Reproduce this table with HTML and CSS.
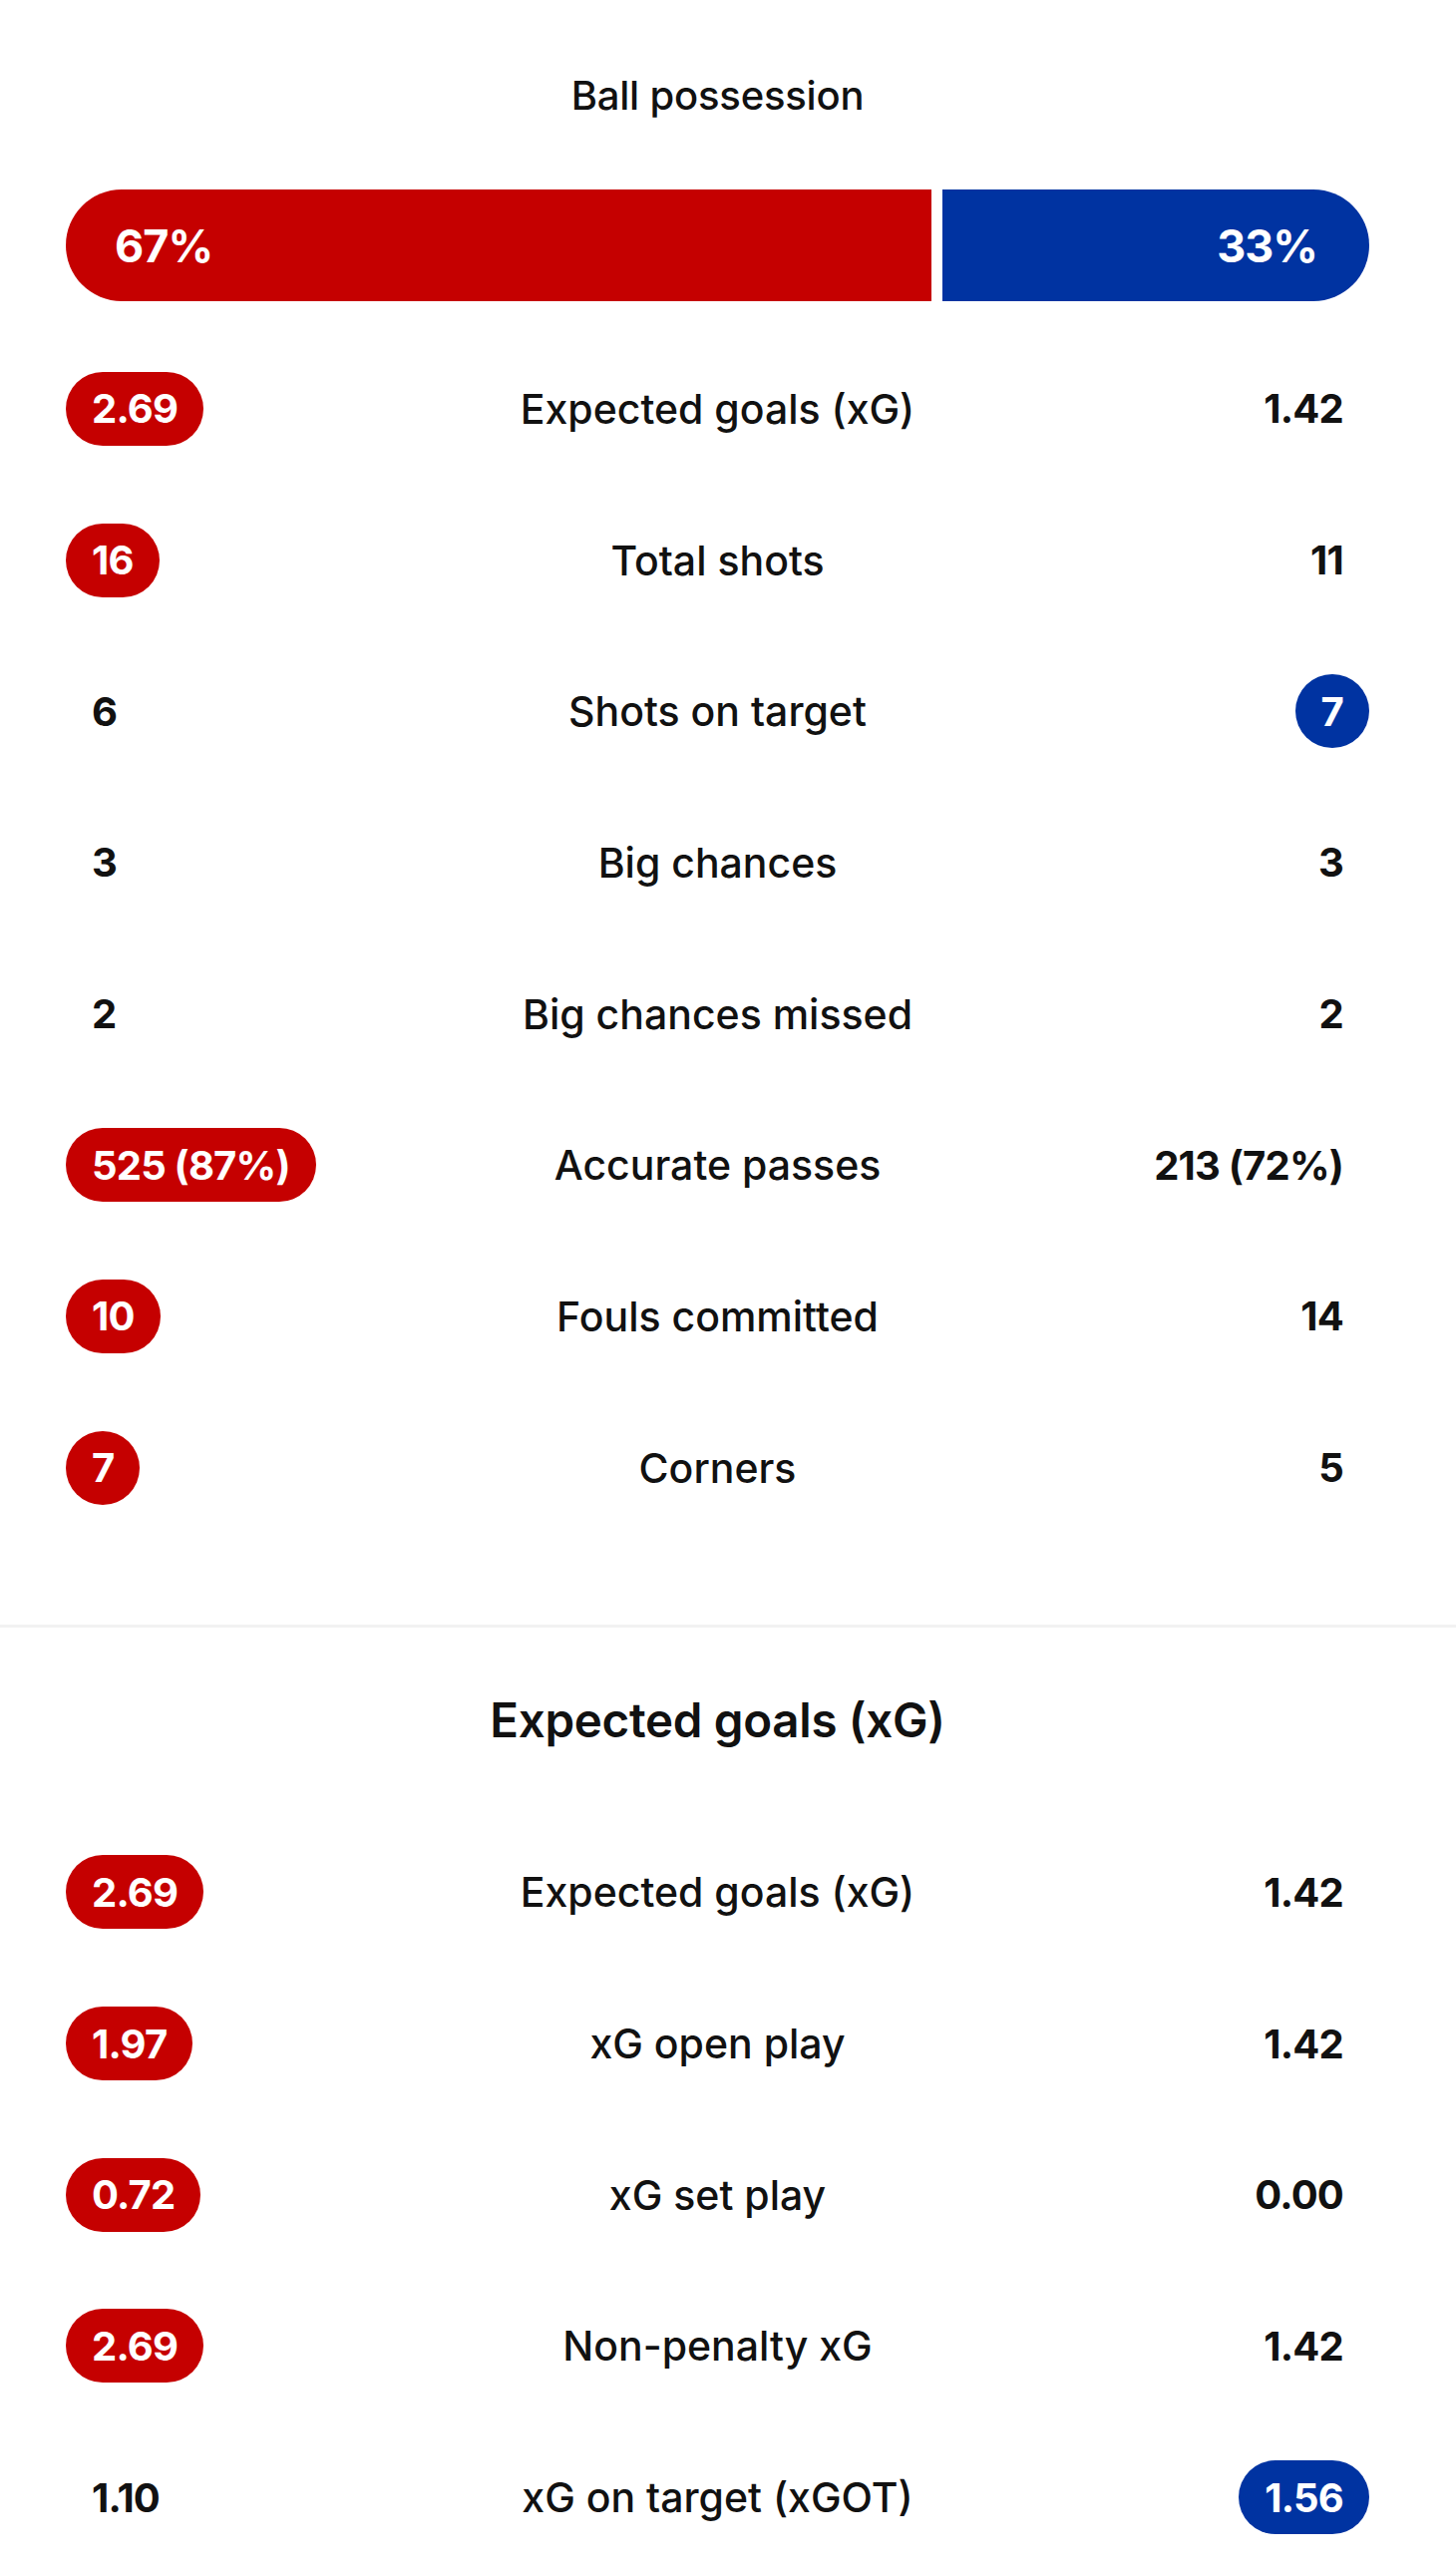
FILE: index.html
```html
<!DOCTYPE html>
<html lang="en">
<head>
<meta charset="utf-8">
<title>Match stats</title>
<link rel="stylesheet" href="styles.css">
</head>
<body>
<main class="stats">
  <section class="group group-top">
    <h2 class="title">Ball possession</h2>
    <div class="possession">
      <div class="poss poss-home" style="flex-basis: calc((100% - 11px) * 0.67)">67%</div>
      <div class="poss poss-away" style="flex-basis: calc((100% - 11px) * 0.33)">33%</div>
    </div>
    <div class="rows">
      <div class="row"><span class="val win-home">2.69</span><span class="label">Expected goals (xG)</span><span class="val">1.42</span></div>
      <div class="row"><span class="val win-home">16</span><span class="label">Total shots</span><span class="val">11</span></div>
      <div class="row"><span class="val">6</span><span class="label">Shots on target</span><span class="val win-away">7</span></div>
      <div class="row"><span class="val">3</span><span class="label">Big chances</span><span class="val">3</span></div>
      <div class="row"><span class="val">2</span><span class="label">Big chances missed</span><span class="val">2</span></div>
      <div class="row"><span class="val win-home">525 (87%)</span><span class="label">Accurate passes</span><span class="val">213 (72%)</span></div>
      <div class="row"><span class="val win-home">10</span><span class="label">Fouls committed</span><span class="val">14</span></div>
      <div class="row"><span class="val win-home">7</span><span class="label">Corners</span><span class="val">5</span></div>
    </div>
  </section>
  <hr class="divider">
  <section class="group group-xg">
    <h2 class="heading">Expected goals (xG)</h2>
    <div class="rows">
      <div class="row"><span class="val win-home">2.69</span><span class="label">Expected goals (xG)</span><span class="val">1.42</span></div>
      <div class="row"><span class="val win-home">1.97</span><span class="label">xG open play</span><span class="val">1.42</span></div>
      <div class="row"><span class="val win-home">0.72</span><span class="label">xG set play</span><span class="val">0.00</span></div>
      <div class="row"><span class="val win-home">2.69</span><span class="label">Non-penalty xG</span><span class="val">1.42</span></div>
      <div class="row"><span class="val">1.10</span><span class="label">xG on target (xGOT)</span><span class="val win-away">1.56</span></div>
    </div>
  </section>
</main>
</body>
</html>
```

FILE: styles.css
```css
* { box-sizing: border-box; }

html, body {
  margin: 0;
  padding: 0;
  background: #ffffff;
}

body {
  font-family: Inter, "Noto Sans", "Liberation Sans", sans-serif;
  color: #111111;
  width: 1460px;
}

.stats {
  display: flex;
  flex-direction: column;
}

.group {
  padding: 0 87px 0 66px;
}

.title {
  margin: 72px 0 0;
  height: 48px;
  line-height: 48px;
  text-align: center;
  font-size: 40px;
  font-weight: 500;
  letter-spacing: -0.2px;
}

.possession {
  display: flex;
  gap: 11px;
  margin-top: 70px;
  height: 112px;
}

.poss {
  flex-grow: 0;
  flex-shrink: 0;
  display: flex;
  align-items: center;
  color: #ffffff;
  font-size: 45px;
  font-weight: 700;
  letter-spacing: -1px;
}

.poss-home {
  background: #c50000;
  border-radius: 56px 0 0 56px;
  padding-left: 49px;
}

.poss-away {
  background: #0033a1;
  border-radius: 0 56px 56px 0;
  justify-content: flex-end;
  padding-right: 52px;
}

.rows {
  display: flex;
  flex-direction: column;
}

.group-top .rows {
  margin-top: 32px;
}

.row {
  height: 151.7px;
  display: grid;
  grid-template-columns: 1fr auto 1fr;
  align-items: center;
}

.row .val:first-child { justify-self: start; }
.row .val:last-child { justify-self: end; }

.val {
  height: 74px;
  min-width: 74px;
  padding: 0 26px;
  border-radius: 37px;
  display: inline-flex;
  align-items: center;
  justify-content: center;
  font-size: 40px;
  font-weight: 700;
  letter-spacing: -0.8px;
  white-space: nowrap;
}

.win-home {
  background: #c50000;
  color: #ffffff;
}

.win-away {
  background: #0033a1;
  color: #ffffff;
}

.label {
  font-size: 41px;
  font-weight: 500;
  text-align: center;
  letter-spacing: 0;
  white-space: nowrap;
}

.divider {
  margin: 81px 0 0;
  border: 0;
  border-top: 3px solid #f2f2f2;
  height: 0;
}

.heading {
  margin: 65px 0 0;
  height: 56px;
  line-height: 56px;
  text-align: center;
  font-size: 47.5px;
  font-weight: 600;
  letter-spacing: -0.3px;
}

.group-xg .rows {
  margin-top: 69px;
}
```
